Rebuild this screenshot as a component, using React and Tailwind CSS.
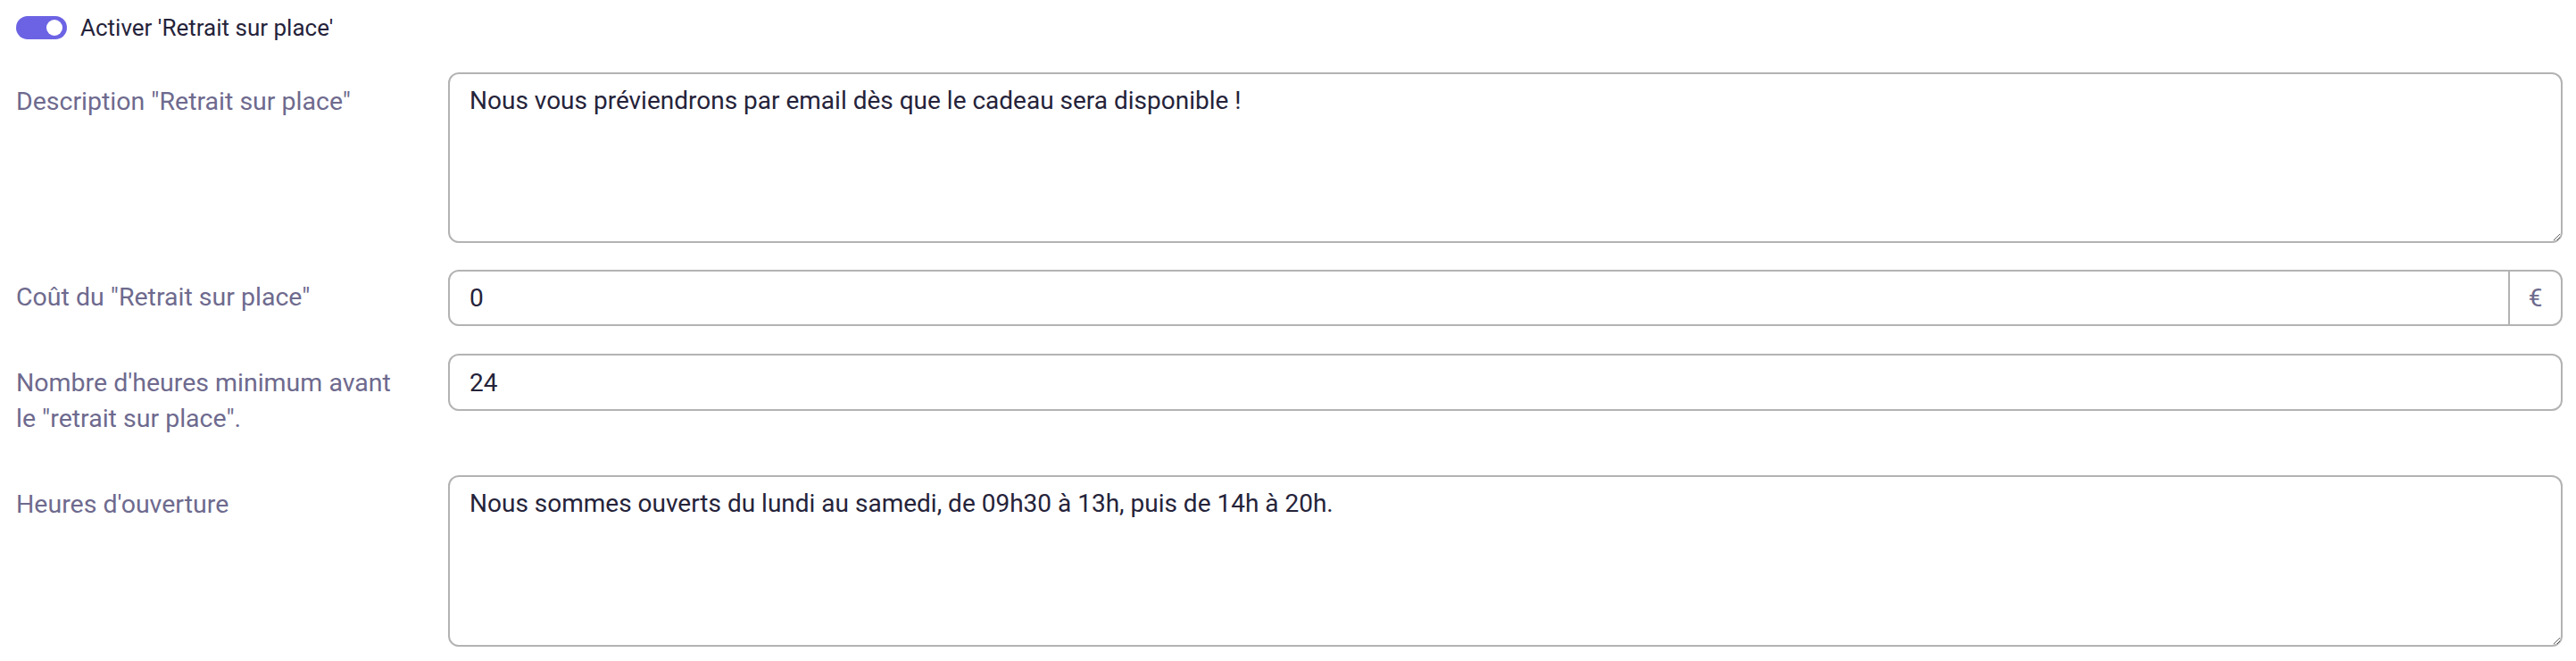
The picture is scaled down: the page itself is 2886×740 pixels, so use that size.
import { useState } from "react";

export default function App() {
  const [enabled, setEnabled] = useState(true);
  const [description, setDescription] = useState(
    "Nous vous préviendrons par email dès que le cadeau sera disponible !"
  );
  const [cost, setCost] = useState("0");
  const [hours, setHours] = useState("24");
  const [opening, setOpening] = useState(
    "Nous sommes ouverts du lundi au samedi, de 09h30 à 13h, puis de 14h à 20h."
  );

  return (
    <div className="min-h-screen bg-white pl-[18px] pr-[15px] pt-[18px] font-['Roboto',sans-serif]">
      {/* Toggle */}
      <div className="flex items-center gap-[15px] h-[26px]">
        <button
          type="button"
          onClick={() => setEnabled(!enabled)}
          className={`flex items-center w-[57px] h-[26px] rounded-full px-[5px] ${
            enabled ? "bg-[#6c63e4] justify-end" : "bg-gray-300 justify-start"
          }`}
        >
          <span className="block w-[18px] h-[18px] rounded-full bg-white" />
        </button>
        <span className="text-[26px] leading-none text-[#25233a]">Activer 'Retrait sur place'</span>
      </div>

      {/* Description */}
      <div className="flex mt-[37px]">
        <label className="w-[484px] shrink-0 pt-[13px] text-[28.5px] leading-[40px] text-[#6e6a8e]">
          Description "Retrait sur place"
        </label>
        <textarea
          value={description}
          onChange={(e) => setDescription(e.target.value)}
          className="flex-1 h-[191px] rounded-[12px] border-2 border-[#b3b3b3] px-[22px] py-[10px] text-[28px] leading-[40px] text-[#25233a] outline-none"
        />
      </div>

      {/* Coût */}
      <div className="flex mt-[30px]">
        <label className="w-[484px] shrink-0 pt-[11px] text-[28.5px] leading-[40px] text-[#6e6a8e]">
          Coût du "Retrait sur place"
        </label>
        <div className="flex flex-1 h-[63px] rounded-[12px] border-2 border-[#b3b3b3] overflow-hidden">
          <input
            value={cost}
            onChange={(e) => setCost(e.target.value)}
            className="flex-1 min-w-0 px-[22px] text-[28px] text-[#25233a] outline-none"
          />
          <span className="flex items-center justify-center w-[59px] border-l-2 border-[#b3b3b3] text-[28px] text-[#6e6a8e]">
            €
          </span>
        </div>
      </div>

      {/* Heures minimum */}
      <div className="flex mt-[31px]">
        <label className="w-[484px] shrink-0 pt-[13px] pb-[12px] text-[28.5px] leading-[40px] text-[#6e6a8e]">
          Nombre d'heures minimum avant
          <br />
          le "retrait sur place".
        </label>
        <div className="flex-1">
          <input
            value={hours}
            onChange={(e) => setHours(e.target.value)}
            className="w-full h-[64px] rounded-[12px] border-2 border-[#b3b3b3] px-[22px] text-[28px] text-[#25233a] outline-none"
          />
        </div>
      </div>

      {/* Heures d'ouverture */}
      <div className="flex mt-[31px]">
        <label className="w-[484px] shrink-0 pt-[13px] text-[28.5px] leading-[40px] text-[#6e6a8e]">
          Heures d'ouverture
        </label>
        <textarea
          value={opening}
          onChange={(e) => setOpening(e.target.value)}
          className="flex-1 h-[192px] rounded-[12px] border-2 border-[#b3b3b3] px-[22px] py-[10px] text-[28px] leading-[40px] text-[#25233a] outline-none"
        />
      </div>
    </div>
  );
}
